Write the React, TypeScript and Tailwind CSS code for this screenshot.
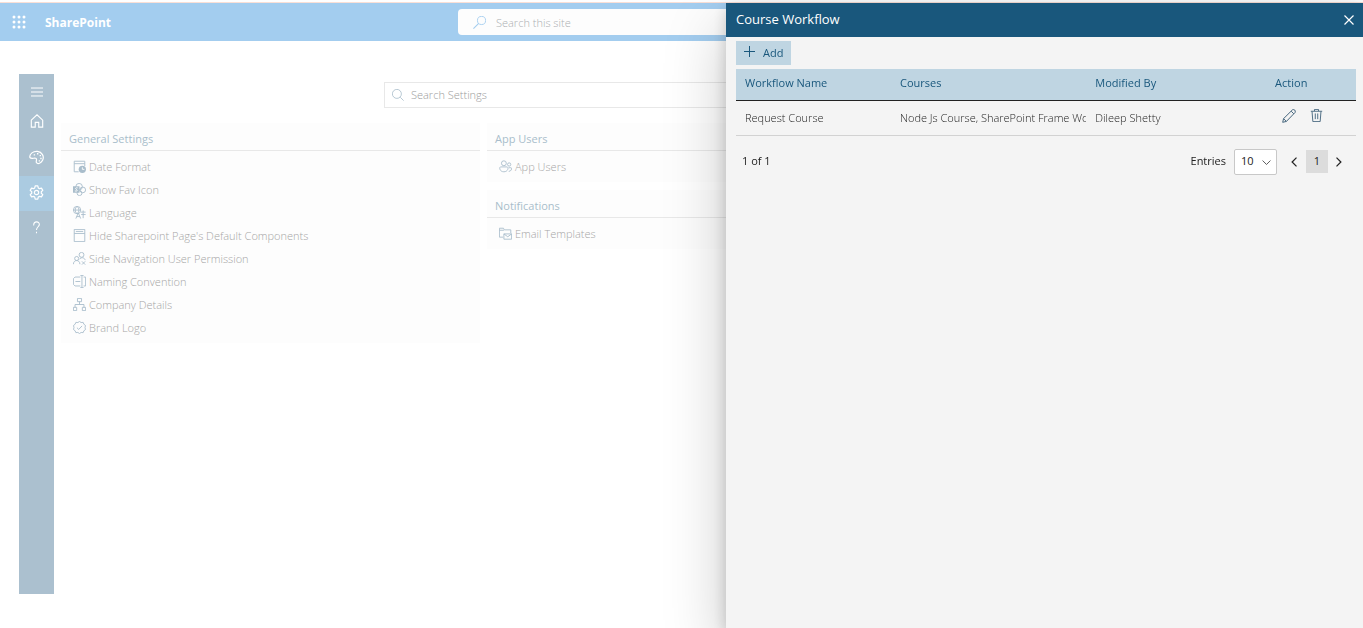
import React, { useState } from 'react';

interface IconProps {
  size?: number;
  className?: string;
  children: React.ReactNode;
}

// Thin line icon on a 16x16 grid
const Icon: React.FC<IconProps> = ({ size = 13, className = '', children }) => (
  <svg
    width={size}
    height={size}
    viewBox="0 0 16 16"
    fill="none"
    stroke="currentColor"
    strokeWidth="1.1"
    className={`shrink-0 ${className}`}
    aria-hidden="true"
  >
    {children}
  </svg>
);

const DateIcon = () => (
  <Icon>
    <path d="M7 14.5H1.5v-13h13v6M1.5 4.5h13" />
    <circle cx="11.5" cy="11.5" r="4.5" fill="currentColor" stroke="none" />
    <path d="M11.5 9v2.5H14" stroke="white" />
  </Icon>
);

const SharePointIcon = () => (
  <Icon>
    <circle cx="7.5" cy="4.5" r="4" />
    <circle cx="12" cy="8.5" r="3.5" />
    <circle cx="8" cy="12.5" r="3" />
    <rect x="0" y="4" width="8" height="8" fill="currentColor" stroke="none" />
    <path d="M5.7 6C3.5 5.2 2.4 7 4 7.8s2.2 2.6-1.7 2" stroke="white" />
  </Icon>
);

const LanguageIcon = () => (
  <Icon>
    <circle cx="5" cy="5" r="4.5" />
    <path d="M.5 5h9M5 .5C2 3 2 7 5 9.5M5 .5c3 2.5 3 6 0 9" />
    <path d="M3.5 15.5l3-7 3 7M4.500 13h4M9.5 7.5h6M12.5 5.5v2M10 10.500h5.5M12.5 8v7" />
  </Icon>
);

const PageIcon = () => (
  <Icon>
    <path d="M1.5.5h13v15h-13zM1.500 5.5h13M3.5 3h9" />
  </Icon>
);

const UserPermissionIcon = () => (
  <Icon>
    <circle cx="10.5" cy="3.5" r="3" />
    <circle cx="4.5" cy="8" r="2.5" />
    <path d="M.5 15c0-6 8-6 8 0M8 9c2-3 6-2.5 7 1M11 11.5l4 4M15 11.5l-4 4" />
  </Icon>
);

const RenameIcon = () => (
  <Icon>
    <path d="M9 2.5H2.5l-2 2v7l2 2H9M13 2.5h2.5v11H13M9 .5h4M9 15.5h4M11 .5v15M3 8h6" />
  </Icon>
);

const OrgIcon = () => (
  <Icon>
    <path d="M5.5.5h5v4h-5zM.5 11.5h4v4h-4zM11.5 11.5h4v4h-4zM8 4.5V8M2.5 11.5V8h11v3.5" />
  </Icon>
);

const BadgeIcon = () => (
  <Icon>
    <path d="M8 .6l2 1.300 2.500-.2.9 2.300 2 1.500L14.800 8l.6 2.500-2 1.500-.9 2.300-2.500-.2-2 1.300-2-1.300-2.500.2-.9-2.300-2-1.500L1.200 8 .6 5.500l2-1.500.9-2.300 2.500.2z" />
    <path d="M4.8 8.2L7 10.400l4.200-4.400" />
  </Icon>
);

const UsersIcon = () => (
  <Icon>
    <circle cx="6" cy="4" r="3" />
    <circle cx="12.5" cy="5.5" r="2" />
    <path d="M2 8.500h8c2 0 1.500 6-4 6s-6-6-4-6zM12 9.500h2.500c2 0 1 4.500-2.500 4.500" />
  </Icon>
);

const MailTemplateIcon = () => (
  <Icon>
    <path d="M5 12.500H.5v-11h5l1 2h8v4M.5 4H6M6 8.500h9.500V15H6zM6 8.500l4.800 3.500 4.700-3.500" />
  </Icon>
);

const HomeIcon = () => (
  <Icon size={14}>
    <path d="M1.500 7L8 1l6.500 6v8H10V9.500H6V15H1.500z" strokeWidth="1.300" />
  </Icon>
);

const PaletteIcon = () => (
  <Icon size={15}>
    <path
      d="M1 8c-1-4 4-7 8-6.500 5 .6 7.500 5.500 5.500 9.500-1.500 3-5 4.500-6.500 2.500-1-1.500 1-3-.5-4.500S3 10.500 1 8z"
      strokeWidth="1.300"
    />
    <path d="M5 5.200h1.500M8.500 4H10M11.300 6h1.500M12 9h1.500M10.300 11.600h1.500" strokeWidth="1.500" />
  </Icon>
);

const GearIcon = () => (
  <Icon size={15}>
    <path
      d="M6.600 1h2.800l.5 2.100 1.300.8 2.100-.6 1.400 2.400-1.600 1.500v1.600l1.600 1.500-1.400 2.400-2.100-.6-1.300.8-.5 2.100H6.600l-.5-2.100-1.300-.8-2.100.6-1.400-2.400 1.600-1.500V7.200L1.300 5.700l1.400-2.400 2.100.6 1.300-.8z"
      strokeWidth="1.300"
      strokeLinejoin="round"
    />
    <circle cx="8" cy="8" r="2.300" strokeWidth="1.300" />
  </Icon>
);

interface SettingItem {
  label: string;
  icon: React.FC;
}

const generalSettings: SettingItem[] = [
  { label: 'Date Format', icon: DateIcon },
  { label: 'Show Fav Icon', icon: SharePointIcon },
  { label: 'Language', icon: LanguageIcon },
  { label: "Hide Sharepoint Page's Default Components", icon: PageIcon },
  { label: 'Side Navigation User Permission', icon: UserPermissionIcon },
  { label: 'Naming Convention', icon: RenameIcon },
  { label: 'Company Details', icon: OrgIcon },
  { label: 'Brand Logo', icon: BadgeIcon },
];

const SettingsCard: React.FC<{ title: string; items: SettingItem[] }> = ({ title, items }) => (
  <section className="bg-[#fdfdfd]">
    <h2 className="h-7 px-2 pt-1 border-b border-[#e8e8e8] text-[11px] leading-6 font-medium text-[#a9bdcb]">{title}</h2>
    <ul className="py-1 px-3">
      {items.map(({ label, icon: ItemIcon }) => (
        <li key={label}>
          <a href="#" className="flex items-center gap-[3px] h-[23px] text-[11px] font-light text-[#a6a6a6]">
            <span className="text-[#a9bdcb]"><ItemIcon /></span>
            <span className="pt-0.5">{label}</span>
          </a>
        </li>
      ))}
    </ul>
  </section>
);

const TopBar = () => (
  <header className="flex items-center h-[38px] bg-[#a3cdef] text-white">
    <div className="flex flex-1 items-center">
      <button className="ml-3 mr-[19px]" aria-label="App launcher">
        <svg width="14" height="14" viewBox="0 0 14 14" fill="currentColor" className="block">
          {[2, 7, 12].map((y) => [2, 7, 12].map((x) => <circle key={`${x}-${y}`} cx={x} cy={y} r="1.5" />))}
        </svg>
      </button>
      <a href="#" className="pt-0.5 text-[12px] font-bold">SharePoint</a>
    </div>
    <label className="flex items-center w-[447px] h-[26px] pl-[15px] gap-2.5 rounded-sm bg-[#fdfdfd] text-[#a3cdef]">
      <Icon>
        <circle cx="10.5" cy="5.5" r="5" />
        <path d="M7 9L.5 15.5" strokeWidth="1.3" />
      </Icon>
      <input
        type="text"
        aria-label="Search this site"
        placeholder="Search this site"
        className="flex-1 pt-0.5 outline-none text-[11px] font-light placeholder:text-[#acafb2]"
      />
    </label>
    <div className="flex-1" />
  </header>
);

const SideNav = () => (
  <nav className="flex flex-col w-[35px] h-[520px] shrink-0 bg-[#abc0cf] text-white">
    <button className="flex items-center justify-center h-[30px] pt-1.5" aria-label="Menu">
      <Icon size={12}>
        <path d="M0 2.700h16M0 8h16M0 13.300h16" strokeWidth="1.330" />
      </Icon>
    </button>
    <button className="flex items-center justify-center h-9 pb-0.5" aria-label="Home"><HomeIcon /></button>
    <button className="flex items-center justify-center h-9 pb-0.5" aria-label="Theme"><PaletteIcon /></button>
    <button className="flex items-center justify-center h-[35px] pb-0.5 bg-[#abcbe1]" aria-label="Settings"><GearIcon /></button>
    <button className="flex items-center justify-center h-[35px] pb-0.5" aria-label="Help">
      <Icon>
        <path d="M4.500 5.500c0-6 7.500-5.500 7-1-.3 2.500-3.500 3-3.500 6.500M8 13.300v1.700" strokeWidth="1.300" />
      </Icon>
    </button>
  </nav>
);

const WorkflowPanel = () => {
  const [pageSize, setPageSize] = useState('10');

  return (
    <aside className="fixed top-[3px] bottom-0 right-0 w-[637px] bg-[#f4f4f4] text-[#222222] shadow-[0_26px_58px_0_rgba(0,0,0,0.22),0_5px_14px_0_rgba(0,0,0,0.18)]">
      <header className="flex items-center justify-between h-[34px] pl-2.5 pr-2 bg-[#19577c] text-white">
        <h2 className="text-[13px]">Course Workflow</h2>
        <button aria-label="Close">
          <Icon size={12} className="block">
            <path d="M2 2l12 12M14 2L2 14" strokeWidth="1.600" />
          </Icon>
        </button>
      </header>

      <div className="pt-1 pl-2.5 pr-[7px] text-[11px]">
        <button className="flex items-center gap-2 h-6 px-2 bg-[#bfd5e2] text-[#19577c]">
          <Icon size={11} className="-mt-1">
            <path d="M8 0v16M0 8h16" strokeWidth="1.450" />
          </Icon>
          Add
        </button>

        <table className="w-full mt-1 table-fixed border-collapse text-left">
          <thead className="bg-[#bfd5e2] text-[#19577c]">
            <tr className="h-[31px] border-b border-[#222222]">
              <th className="w-[25%] pl-[9px] pb-0.5 font-medium">Workflow Name</th>
              <th className="w-[31.500%] pl-[9px] pb-0.5 font-medium">Courses</th>
              <th className="w-[29%] pl-[9px] pb-0.5 font-medium">Modified By</th>
              <th className="pl-[9px] pb-0.5 font-medium">Action</th>
            </tr>
          </thead>
          <tbody className="font-light">
            <tr className="h-[35px] border-b border-[#d2d2d2]">
              <td className="pl-[9px] pt-0.5">Request Course</td>
              <td className="pl-[9px] pt-0.5">
                <div className="overflow-hidden whitespace-nowrap">Node Js Course, SharePoint Frame Work</div>
              </td>
              <td className="pl-[9px] pt-0.5">Dileep Shetty</td>
              <td className="pl-4 pb-1">
                <div className="flex gap-3.5 text-[#3f6179]">
                  <button aria-label="Edit">
                    <Icon size={14} className="block">
                      <path d="M.8 15.200l1-4.200L12 .9c2-1 3.900.9 3 3L5 14.200zM10.500 2.500l3 3M1.800 11L5 14.200" />
                    </Icon>
                  </button>
                  <button aria-label="Delete">
                    <Icon className="block">
                      <path d="M1 2.800h14M5.500 2.500v-2h5v2M2.500 3l1 12.500h9l1-12.500M6.500 5.500v7M9.500 5.500v7" />
                    </Icon>
                  </button>
                </div>
              </td>
            </tr>
          </tbody>
        </table>

        <div className="flex items-center justify-between mt-[13px] pl-1.5 pr-3">
          <span>1 of 1</span>
          <div className="flex items-center">
            <label htmlFor="entries" className="mr-2">Entries</label>
            <div className="relative">
              <select
                id="entries"
                value={pageSize}
                onChange={(e) => setPageSize(e.target.value)}
                className="block w-[43px] h-[26px] pl-1.5 appearance-none rounded-xs border border-[#c8c8c8] bg-white"
              >
                <option value="10">10</option>
                <option value="20">20</option>
                <option value="50">50</option>
              </select>
              <Icon size={9} className="absolute right-1.5 top-[9px] pointer-events-none">
                <path d="M1 4.500l7 7 7-7" strokeWidth="1.300" />
              </Icon>
            </div>
            <button className="ml-3 mr-[7px]" aria-label="Previous page">
              <Icon size={10} className="block">
                <path d="M12 1L5 8l7 7" strokeWidth="2" />
              </Icon>
            </button>
            <button className="w-[22px] h-[23px] bg-[#dcdcdc]">1</button>
            <button className="ml-1.5" aria-label="Next page">
              <Icon size={10} className="block">
                <path d="M4 1l7 7-7 7" strokeWidth="2" />
              </Icon>
            </button>
          </div>
        </div>
      </div>
    </aside>
  );
};

const App = () => (
  <div className="min-h-screen overflow-hidden bg-white pt-0.5 font-['Open_Sans','Noto_Sans',sans-serif]">
    <div className="border-t border-[#fadfd6]">
      <TopBar />
    </div>
    <div className="flex pt-[33px] pl-[19px] pr-[31px]">
      <SideNav />
      <main className="flex-1 pt-2 pl-[7px]">
        <label className="flex items-center w-[625px] h-[26px] mx-auto pl-[7px] gap-[7px] border border-[#e8e8e8] text-[#a9bdcb]">
          <Icon size={12}>
            <circle cx="6.500" cy="6.500" r="6" />
            <path d="M11 11l4.500 4.500" />
          </Icon>
          <input
            type="text"
            aria-label="Search Settings"
            placeholder="Search Settings"
            className="flex-1 outline-none text-[11px] font-light placeholder:text-[#9c9c9c]"
          />
        </label>
        <div className="grid grid-cols-3 items-start gap-[7px] mt-[15px]">
          <SettingsCard title="General Settings" items={generalSettings} />
          <div className="flex flex-col gap-2">
            <SettingsCard title="App Users" items={[{ label: 'App Users', icon: UsersIcon }]} />
            <SettingsCard title="Notifications" items={[{ label: 'Email Templates', icon: MailTemplateIcon }]} />
          </div>
        </div>
      </main>
    </div>
    <WorkflowPanel />
  </div>
);

export default App;
